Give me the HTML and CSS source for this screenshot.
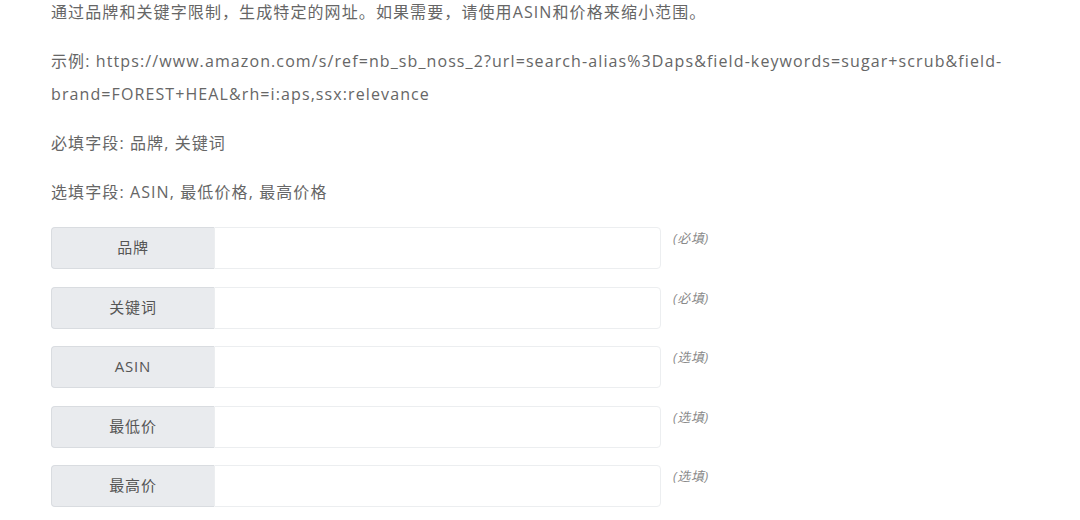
FILE: index.html
```html
<!DOCTYPE html>
<html lang="zh-CN">
<head>
    <meta charset="UTF-8">
    <meta name="viewport" content="width=device-width, initial-scale=1.0">
    <title>网址生成</title>
    <link rel="stylesheet" href="styles.css">
</head>
<body>

<div class="content">
    <p>通过品牌和关键字限制，生成特定的网址。如果需要，请使用ASIN和价格来缩小范围。</p>
    <p>示例: https://www.amazon.com/s/ref=nb_sb_noss_2?url=search-alias%3Daps&amp;field-keywords=sugar+scrub&amp;field-brand=FOREST+HEAL&amp;rh=i:aps,ssx:relevance</p>
    <p>必填字段: 品牌, 关键词</p>
    <p>选填字段: ASIN, 最低价格, 最高价格</p>

    <div class="form">
        <div class="form-row">
            <div class="input-group">
                <span class="addon">品牌</span>
                <input type="text" id="brand">
            </div>
            <span class="hint">(必填)</span>
        </div>
        <div class="form-row">
            <div class="input-group">
                <span class="addon">关键词</span>
                <input type="text" id="keywords">
            </div>
            <span class="hint">(必填)</span>
        </div>
        <div class="form-row">
            <div class="input-group">
                <span class="addon">ASIN</span>
                <input type="text" id="asin">
            </div>
            <span class="hint">(选填)</span>
        </div>
        <div class="form-row">
            <div class="input-group">
                <span class="addon">最低价</span>
                <input type="text" id="minPrice">
            </div>
            <span class="hint">(选填)</span>
        </div>
        <div class="form-row">
            <div class="input-group">
                <span class="addon">最高价</span>
                <input type="text" id="maxPrice">
            </div>
            <span class="hint">(选填)</span>
        </div>
    </div>
</div>

</body>
</html>
```

FILE: styles.css
```css
body {
    margin: 0;
    padding: 0;
    background-color: #fff;
    font-family: "Open Sans", "Noto Sans CJK SC", sans-serif;
    color: #666;
}
.content {
    width: 965px;
    padding-left: 51px;
    margin-top: -4px;
}
.content p {
    font-size: 16px;
    line-height: 33px;
    letter-spacing: 1.1px;
    margin: 0 0 16px;
}
.form {
    margin-top: 18px;
}
.form-row {
    display: flex;
    align-items: flex-start;
    margin-bottom: 17.5px;
}
.input-group {
    display: flex;
    width: 610px;
    height: 42px;
}
.addon {
    width: 163px;
    box-sizing: border-box;
    display: flex;
    align-items: center;
    justify-content: center;
    padding-bottom: 3px;
    background-color: #e9ebee;
    border: 1px solid #d9dce0;
    border-right: none;
    border-radius: 4px 0 0 4px;
    font-size: 15px;
    letter-spacing: 0.8px;
    color: #555;
}
.input-group input {
    flex-grow: 1;
    box-sizing: border-box;
    height: 42px;
    margin: 0;
    padding: 6px 12px;
    border: 1px solid #eceef0;
    border-radius: 0 4px 4px 0;
    outline: none;
}
.hint {
    margin-left: 12px;
    margin-top: 1px;
    font-size: 13px;
    letter-spacing: 0.6px;
    font-style: italic;
    color: #8a8a8a;
}
```
